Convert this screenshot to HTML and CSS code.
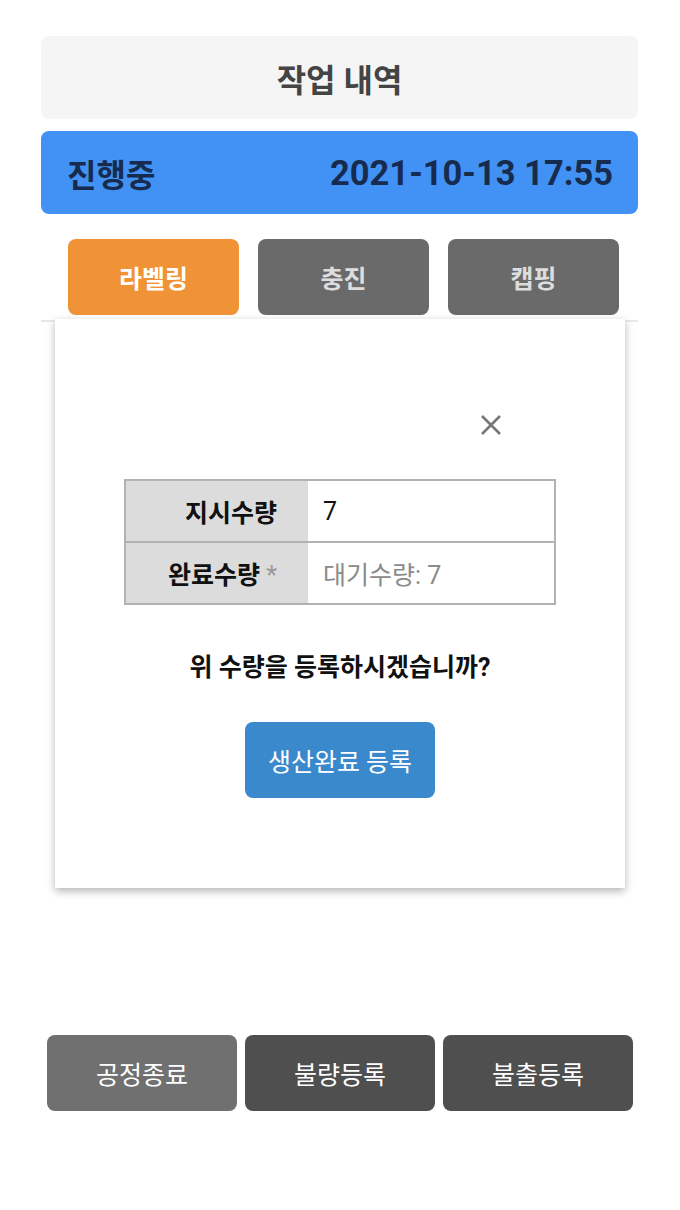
FILE: index.html
```html
<!DOCTYPE html>
<html lang="ko">
<head>
    <meta charset="UTF-8">
    <meta name="viewport" content="width=device-width, initial-scale=1.0">
    <title>작업 내역</title>
    <link rel="stylesheet" href="styles.css">
</head>
<body>
    <div class="page">
        <!-- Header -->
        <div class="title-box">작업 내역</div>

        <div class="status-bar">
            <span class="status">진행중</span>
            <span class="date">2021-10-13 17:55</span>
        </div>

        <!-- Process tabs -->
        <div class="tabs">
            <div class="tab active">라벨링</div>
            <div class="tab">충진</div>
            <div class="tab">캡핑</div>
        </div>
        <div class="divider"></div>

        <!-- Bottom actions -->
        <div class="actions">
            <button class="action light">공정종료</button>
            <button class="action">불량등록</button>
            <button class="action">불출등록</button>
        </div>

        <!-- Complete modal -->
        <div class="modal">
            <div class="modal-head">
                <svg class="close" width="22" height="22" viewBox="0 0 22 22">
                    <path d="M2 2 L20 20 M20 2 L2 20" stroke="#777" stroke-width="2.6" fill="none"/>
                </svg>
            </div>

            <table class="qty-table">
                <colgroup>
                    <col class="col-label">
                    <col>
                </colgroup>
                <tr>
                    <th>지시수량</th>
                    <td>7</td>
                </tr>
                <tr>
                    <th>완료수량 <span class="req">*</span></th>
                    <td class="placeholder">대기수량: 7</td>
                </tr>
            </table>

            <p class="question">위 수량을 등록하시겠습니까?</p>

            <button class="submit">생산완료 등록</button>
        </div>
    </div>
</body>
</html>
```

FILE: styles.css
```css
body {
    margin: 0;
    font-family: Roboto, "Noto Sans CJK KR", sans-serif;
    background: #FFFFFF;
}

.page {
    position: relative;
    width: 680px;
    height: 1210px;
    padding: 36px 42px 0 41px;
    box-sizing: border-box;
}

.title-box {
    height: 83px;
    background: #F5F5F5;
    border-radius: 8px;
    display: flex;
    align-items: center;
    justify-content: center;
    font-size: 32px;
    font-weight: 700;
    color: #444;
}

.status-bar {
    height: 83px;
    margin-top: 12px;
    background: #4192F4;
    border-radius: 8px;
    display: flex;
    align-items: center;
    justify-content: space-between;
    padding: 0 25px 0 26px;
    color: #172B4E;
    font-weight: 700;
}

.status {
    font-size: 32px;
}

.date {
    font-size: 34.5px;
}

.tabs {
    display: flex;
    gap: 19px;
    margin: 25px 0 0 27px;
}

.tab {
    width: 171px;
    height: 76px;
    border-radius: 8px;
    background: #6A6A6A;
    color: #DDD;
    font-size: 25px;
    font-weight: 700;
    display: flex;
    align-items: center;
    justify-content: center;
}

.tab.active {
    background: #F09236;
    color: #FFF;
}

.divider {
    height: 2px;
    margin-top: 5px;
    background: #E8E8E8;
}

.actions {
    display: flex;
    gap: 8px;
    margin: 713px 0 0 6px;
}

.action {
    width: 190px;
    height: 76px;
    border: none;
    border-radius: 8px;
    background: #4F4F4F;
    color: #FFF;
    font-family: inherit;
    font-size: 25px;
}

.action.light {
    background: #707070;
}

.modal {
    position: absolute;
    left: 55px;
    top: 319px;
    width: 570px;
    height: 569px;
    background: #FFF;
    box-shadow: 0 3px 8px rgba(0, 0, 0, 0.3);
    display: flex;
    flex-direction: column;
    align-items: center;
}

.modal-head {
    width: 100%;
    display: flex;
    justify-content: flex-end;
    padding: 95px 123px 0 0;
    box-sizing: border-box;
}

.close {
    display: block;
}

.qty-table {
    margin-top: 43px;
    width: 432px;
    table-layout: fixed;
    border-collapse: collapse;
    border: 2px solid #B2B2B2;
}

.col-label {
    width: 183px;
}

.qty-table tr {
    height: 62px;
}

.qty-table th {
    background: #DCDCDC;
    text-align: right;
    padding: 0 31px 0 0;
    font-size: 25px;
    font-weight: 700;
    color: #111;
    border-bottom: 2px solid #B2B2B2;
}

.qty-table td {
    padding: 0 0 0 15px;
    font-size: 25px;
    color: #111;
    border-bottom: 2px solid #B2B2B2;
}

.qty-table .req {
    color: #999;
    font-weight: 400;
}

.qty-table .placeholder {
    color: #8A8A8A;
}

.question {
    margin: 48px 0 0;
    font-size: 25px;
    line-height: 30px;
    font-weight: 700;
    color: #111;
}

.submit {
    margin-top: 39px;
    width: 190px;
    height: 76px;
    border: none;
    border-radius: 8px;
    background: #3A89CD;
    color: #FFF;
    font-family: inherit;
    font-size: 25px;
}
```
